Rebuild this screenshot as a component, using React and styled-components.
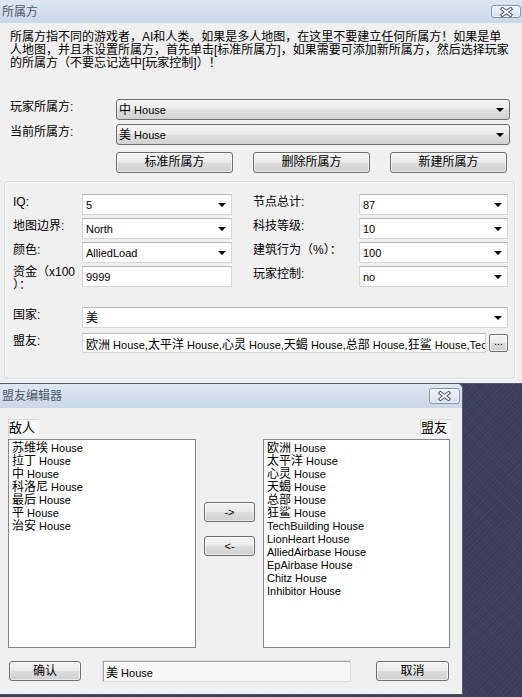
import React from "react";
import styled, { createGlobalStyle, css } from "styled-components";

const FONT = `"Liberation Sans", "Noto Sans CJK SC", sans-serif`;

const Global = createGlobalStyle`
  html, body {
    margin: 0;
    padding: 0;
    width: 522px;
    height: 697px;
    overflow: hidden;
    background: #3a3e58;
  }
  body {
    font-family: ${FONT};
    font-size: 12px;
    color: #000;
  }
  * { box-sizing: border-box; }
`;

const Latin = styled.span`
  font-size: 11px;
`;

const InlineText = styled.span`
  white-space: pre;
`;

const CJK_RE = /([\u3000-\u303f\u3400-\u9fff\uff00-\uffef]+)/;

const Mixed = ({ children }) => {
  const text = String(children);
  return (
    <InlineText>
      {text
        .split(CJK_RE)
        .filter((s) => s.length)
        .map((s, i) => (CJK_RE.test(s) ? <span key={i}>{s}</span> : <Latin key={i}>{s}</Latin>))}
    </InlineText>
  );
};

const Page = styled.div`
  width: 522px;
  height: 697px;
  overflow: hidden;
  display: flex;
  flex-direction: column;
  background:
    repeating-linear-gradient(45deg, rgba(255,255,255,0.03) 0 1px, transparent 1px 3px),
    repeating-linear-gradient(-45deg, rgba(0,0,0,0.08) 0 1px, transparent 1px 4px),
    #3b3f5b;
`;

const Window = styled.div`
  width: ${(p) => p.$width}px;
  height: ${(p) => p.$height}px;
  flex: none;
  background: #f0f0f0;
  display: flex;
  flex-direction: column;
  ${(p) =>
    p.$overlay
      ? css`
          margin-top: -1px;
          border-top: 1px solid #565d68;
          border-right: 1px solid #565d68;
          border-bottom: 1px solid #4a5059;
          border-top-right-radius: 6px;
          overflow: hidden;
        `
      : css`
          border-bottom: 1px solid #565d68;
        `}
`;

const TitleBar = styled.div`
  height: ${(p) => p.$h}px;
  flex: none;
  display: flex;
  align-items: ${(p) => (p.$closeTop ? "flex-start" : "center")};
  justify-content: space-between;
  padding: 0 ${(p) => p.$pr}px 0 2px;
  background: linear-gradient(#dde7f2, #c9d8e9);
`;

const TitleText = styled.span`
  font-size: 12px;
  line-height: 14px;
  color: #4f5a66;
  align-self: center;
`;

const CloseButton = styled.div`
  width: ${(p) => p.$w}px;
  height: ${(p) => p.$h}px;
  margin-top: ${(p) => p.$mt}px;
  border: 1px solid #8394aa;
  border-radius: 3px;
  background: linear-gradient(#eef3f8, #d5dfeb);
  box-shadow: inset 0 0 0 1px rgba(255, 255, 255, 0.6);
  display: flex;
  align-items: center;
  justify-content: center;
`;

const CloseGlyph = () => (
  <svg width="13" height="10" viewBox="0 0 13 10">
    <path d="M2.5 2 L10.5 8 M10.5 2 L2.5 8" stroke="#485465" strokeWidth="3.6" strokeLinecap="square" fill="none" />
    <path d="M2.5 2 L10.5 8 M10.5 2 L2.5 8" stroke="#ffffff" strokeWidth="1.7" strokeLinecap="square" fill="none" />
  </svg>
);

const TopSection = styled.div`
  padding: 8px 10px 0 10px;
  display: flex;
  flex-direction: column;
`;

const Paragraph = styled.div`
  line-height: 13px;
  font-size: 12px;
  white-space: nowrap;
`;

const FieldRow = styled.div`
  display: flex;
  align-items: flex-start;
  margin-top: ${(p) => p.$mt || 0}px;
  height: ${(p) => p.$h || 21}px;
`;

const FieldLabel = styled.div`
  width: ${(p) => p.$w}px;
  flex: none;
  padding-top: 2px;
  line-height: 13px;
  font-size: 12px;
  white-space: nowrap;
`;

const ComboBox = styled.div`
  width: ${(p) => p.$w}px;
  height: ${(p) => p.$h || 21}px;
  flex: none;
  display: flex;
  align-items: center;
  font-size: 12px;
  ${(p) =>
    p.$aero
      ? css`
          border: 1px solid #707070;
          border-radius: 3px;
          background: linear-gradient(#f4f4f4 0%, #ececec 48%, #dfdfdf 52%, #d2d2d2 100%);
          padding-left: 2px;
        `
      : css`
          border: 1px solid #d4d6da;
          border-top-color: #b5b8be;
          background: #fff;
          padding-left: 3px;
        `}
`;

const ComboText = styled.span`
  flex: 1;
  white-space: nowrap;
  overflow: hidden;
  line-height: 14px;
`;

const Arrow = styled.span`
  flex: none;
  width: 0;
  height: 0;
  margin: 1px 5px 0 4px;
  border-left: 4px solid transparent;
  border-right: 4px solid transparent;
  border-top: 4px solid #000;
`;

const Combo = ({ w, h, aero, children }) => (
  <ComboBox $w={w} $h={h} $aero={aero}>
    <ComboText>
      <Mixed>{children}</Mixed>
    </ComboText>
    <Arrow />
  </ComboBox>
);

const ButtonRow = styled.div`
  display: flex;
  gap: 20px;
  margin: 7px 0 0 106px;
`;

const Button = styled.div`
  width: ${(p) => p.$w}px;
  height: ${(p) => p.$h || 21}px;
  flex: none;
  border: 1px solid #707070;
  border-radius: 3px;
  background: linear-gradient(#f2f2f2 0%, #ebebeb 48%, #dddddd 52%, #cfcfcf 100%);
  box-shadow: inset 0 0 0 1px rgba(255, 255, 255, 0.55);
  display: flex;
  align-items: center;
  justify-content: center;
  font-size: ${(p) => p.$fs || 12}px;
  line-height: 13px;
  margin-left: ${(p) => p.$ml || 0}px;
  margin-top: ${(p) => p.$mt || 0}px;
  white-space: nowrap;
`;

const GroupBox = styled.div`
  margin: 8px 7px 0 4px;
  height: 198px;
  border: 1px solid #d5dbe0;
  border-radius: 3px;
  box-shadow: inset 1px 1px 0 #fff, 1px 1px 0 #fff;
  padding: 12px 6px 0 8px;
  display: flex;
  flex-direction: column;
`;

const FieldGrid = styled.div`
  display: grid;
  grid-template-columns: 69px 171px 106px 149px;
  grid-auto-rows: 21px;
  row-gap: 3px;
`;

const GridLabel = styled.div`
  padding-top: ${(p) => (p.$wrap ? 0 : 2)}px;
  line-height: 13px;
  white-space: nowrap;
  font-size: 12px;
`;

const TextInput = styled.div`
  width: ${(p) => p.$w}px;
  height: ${(p) => p.$h || 21}px;
  flex: none;
  border: 1px solid #d4d6da;
  border-top-color: #b5b8be;
  background: #fff;
  padding-left: 3px;
  display: flex;
  align-items: center;
  overflow: hidden;
  white-space: nowrap;
  font-size: 12px;
`;

const SmallButton = styled(Button)`
  align-self: center;
  margin-left: 3px;
  font-size: 11px;
  padding-bottom: 3px;
  border-radius: 2px;
`;

const DialogBody = styled.div`
  flex: 1;
  padding: 11px 11px 0 8px;
  display: flex;
  flex-direction: column;
`;

const HeaderRow = styled.div`
  display: flex;
  justify-content: space-between;
  height: 18px;
`;

const ColumnHeader = styled.div`
  width: 31px;
  height: 18px;
  border-top: 1px solid #d8d8d8;
  border-left: 1px solid #d8d8d8;
  background: #f7f7f7;
  font-size: 13px;
  line-height: 16px;
  white-space: nowrap;
`;

const ListsRow = styled.div`
  margin-top: 2px;
  display: flex;
  gap: 8px;
  height: 209px;
`;

const ListBox = styled.div`
  width: ${(p) => p.$w}px;
  height: 209px;
  border: 1px solid #828790;
  background: #fff;
  padding: 2px 3px;
  display: flex;
  flex-direction: column;
`;

const ListItem = styled.div`
  line-height: 13px;
  height: 13px;
  font-size: 12px;
  white-space: nowrap;
`;

const MiddleColumn = styled.div`
  width: 51px;
  display: flex;
  flex-direction: column;
`;

const BottomRow = styled.div`
  margin-top: 12px;
  display: flex;
  align-items: center;
  height: 22px;
`;

const ReadOnlyEdit = styled.div`
  width: 249px;
  height: 22px;
  margin-left: 21px;
  border: 1px solid #dcdcdc;
  box-shadow: inset 1px 1px 0 #a0a0a0;
  background: #f7f7f7;
  padding-left: 3px;
  display: flex;
  align-items: center;
  font-size: 12px;
  white-space: nowrap;
`;

const leftColumn = [
  ["IQ:", "5"],
  ["地图边界:", "North"],
  ["颜色:", "AlliedLoad"],
];
const rightColumn = [
  ["节点总计:", "87"],
  ["科技等级:", "10"],
  ["建筑行为（%）：", "100"],
];

const enemies = ["苏维埃", "拉丁", "中", "科洛尼", "最后", "平", "治安"];
const allies = [
  "欧洲 House",
  "太平洋 House",
  "心灵 House",
  "天蝎 House",
  "总部 House",
  "狂鲨 House",
  "TechBuilding House",
  "LionHeart House",
  "AlliedAirbase House",
  "EpAirbase House",
  "Chitz House",
  "Inhibitor House",
];

export default function App() {
  return (
    <>
      <Global />
      <Page>
        <Window $width={522} $height={384}>
          <TitleBar $h={23} $pr={1}>
            <TitleText>所属方</TitleText>
            <CloseButton $w={30} $h={13} $mt={0}>
              <CloseGlyph />
            </CloseButton>
          </TitleBar>
          <TopSection>
            <Paragraph>
              所属方指不同的游戏者，AI和人类。如果是多人地图，在这里不要建立任何所属方！如果是单
              <br />
              人地图，并且未设置所属方，首先单击[标准所属方]，如果需要可添加新所属方，然后选择玩家
              <br />
              的所属方（不要忘记选中[玩家控制]）！
            </Paragraph>
            <FieldRow $mt={29}>
              <FieldLabel $w={106}>玩家所属方:</FieldLabel>
              <Combo w={394} aero>
                中 House
              </Combo>
            </FieldRow>
            <FieldRow $mt={4}>
              <FieldLabel $w={106}>当前所属方:</FieldLabel>
              <Combo w={394} aero>
                美 House
              </Combo>
            </FieldRow>
            <ButtonRow>
              <Button $w={117}>标准所属方</Button>
              <Button $w={117}>删除所属方</Button>
              <Button $w={117}>新建所属方</Button>
            </ButtonRow>
          </TopSection>
          <GroupBox>
            <FieldGrid>
              {leftColumn.map(([l, v], i) => (
                <React.Fragment key={l}>
                  <GridLabel>{l}</GridLabel>
                  <Combo w={150}>{v}</Combo>
                  <GridLabel>{rightColumn[i][0]}</GridLabel>
                  <Combo w={149}>{rightColumn[i][1]}</Combo>
                </React.Fragment>
              ))}
              <GridLabel $wrap>
                资金（x100
                <br />
                ）：
              </GridLabel>
              <TextInput $w={150}>
                <Mixed>9999</Mixed>
              </TextInput>
              <GridLabel>玩家控制:</GridLabel>
              <Combo w={149}>no</Combo>
            </FieldGrid>
            <FieldRow $mt={20}>
              <FieldLabel $w={69}>国家:</FieldLabel>
              <Combo w={426}>美</Combo>
            </FieldRow>
            <FieldRow $mt={5} $h={20}>
              <FieldLabel $w={69}>盟友:</FieldLabel>
              <TextInput $w={404} $h={20}>
                <Mixed>欧洲 House,太平洋 House,心灵 House,天蝎 House,总部 House,狂鲨 House,Tech</Mixed>
              </TextInput>
              <SmallButton $w={19} $h={18}>
                ...
              </SmallButton>
            </FieldRow>
          </GroupBox>
        </Window>
        <Window $width={463} $height={312} $overlay>
          <TitleBar $h={24} $pr={2} $closeTop>
            <TitleText>盟友编辑器</TitleText>
            <CloseButton $w={31} $h={16} $mt={4}>
              <CloseGlyph />
            </CloseButton>
          </TitleBar>
          <DialogBody>
            <HeaderRow>
              <ColumnHeader>敌人</ColumnHeader>
              <ColumnHeader>盟友</ColumnHeader>
            </HeaderRow>
            <ListsRow>
              <ListBox $w={188}>
                {enemies.map((e) => (
                  <ListItem key={e}>
                    <Mixed>{`${e} House`}</Mixed>
                  </ListItem>
                ))}
              </ListBox>
              <MiddleColumn>
                <Button $w={51} $h={20} $mt={63} $fs={11}>
                  -&gt;
                </Button>
                <Button $w={51} $h={20} $mt={14} $fs={11}>
                  &lt;-
                </Button>
              </MiddleColumn>
              <ListBox $w={187}>
                {allies.map((a) => (
                  <ListItem key={a}>
                    <Mixed>{a}</Mixed>
                  </ListItem>
                ))}
              </ListBox>
            </ListsRow>
            <BottomRow>
              <Button $w={72} $h={20} $ml={1}>
                确认
              </Button>
              <ReadOnlyEdit>
                <Mixed>美 House</Mixed>
              </ReadOnlyEdit>
              <Button $w={73} $h={20} $ml={25}>
                取消
              </Button>
            </BottomRow>
          </DialogBody>
        </Window>
      </Page>
    </>
  );
}
